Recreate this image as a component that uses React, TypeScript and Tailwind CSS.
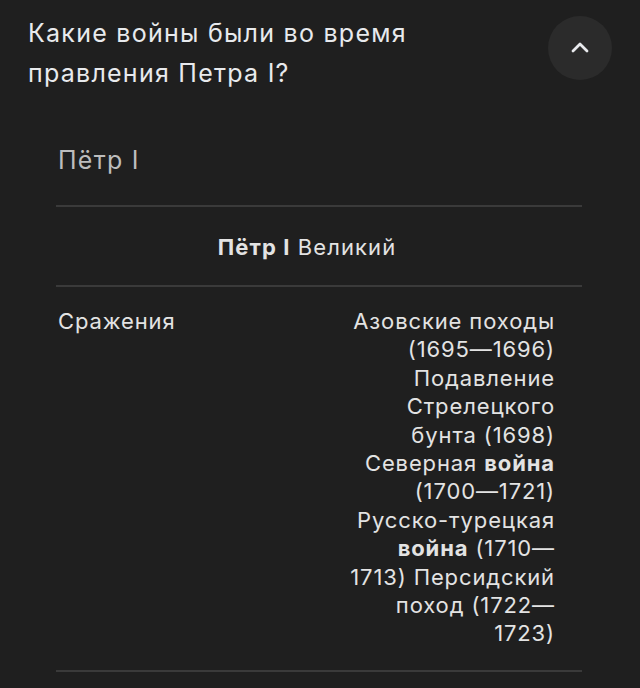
const font = { fontFamily: "Inter, Roboto, sans-serif" };

function ChevronUpIcon() {
	return (
		<svg width="20" height="14" viewBox="0 0 20 14" fill="none" aria-hidden="true">
			<polyline
				points="3,11 10,4 17,11"
				stroke="#e8eaed"
				strokeWidth="2.8"
				strokeLinecap="round"
				strokeLinejoin="round"
			/>
		</svg>
	);
}

export default function App() {
	return (
		<div className="min-h-[688px] w-full bg-[#1f1f1f] text-[#e3e3e3]" style={font}>
			<div className="flex items-start justify-between pl-7 pr-7 pt-[13px]">
				<h1 className="text-[25px] leading-[40px] tracking-[0.05em] text-[#e8eaed]">
					Какие войны были во время
					<br />
					правления Петра I?
				</h1>
				<button className="mt-[3px] flex h-16 w-16 items-center justify-center rounded-full bg-[#2b2b2b] pb-[2px]">
					<ChevronUpIcon />
				</button>
			</div>

			<div className="ml-[56px] mr-[58px] mt-[51px]">
				<div className="pl-[2px] pb-[29px] text-[25px] leading-[32px] tracking-[0.05em] text-[#bdbdbd]">Пётр I</div>
				<div className="h-[2px] bg-[#3a3a3a]" />
				<div className="pt-[26px] pb-[24px] pr-[24px] text-center text-[22px] leading-[28px] tracking-[0.05em]">
					<b className="font-bold">Пётр I</b> Великий
				</div>
				<div className="h-[2px] bg-[#3a3a3a]" />
				<div className="flex justify-between pl-[2px] pr-[27px] pt-[20px] pb-[22px] text-[22px] leading-[28.4px] tracking-[0.04em]">
					<div>Сражения</div>
					<div className="text-right">
						Азовские походы
						<br />
						(1695—1696)
						<br />
						Подавление
						<br />
						Стрелецкого
						<br />
						бунта (1698)
						<br />
						Северная <b className="font-bold">война</b>
						<br />
						(1700—1721)
						<br />
						Русско-турецкая
						<br />
						<b className="font-bold">война</b> (1710—
						<br />
						1713) Персидский
						<br />
						поход (1722—
						<br />
						1723)
					</div>
				</div>
				<div className="h-[2px] bg-[#3a3a3a]" />
			</div>
		</div>
	);
}
